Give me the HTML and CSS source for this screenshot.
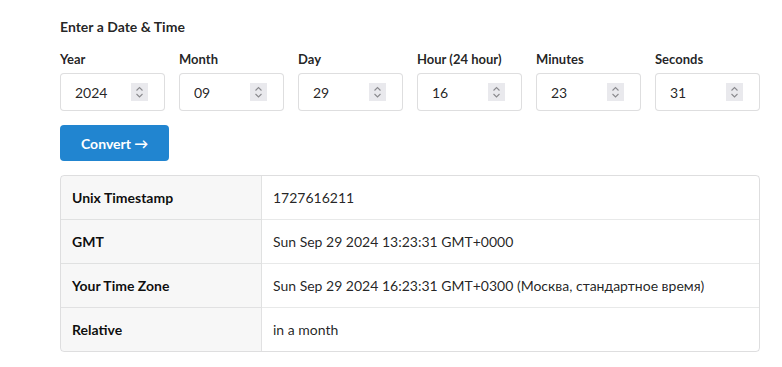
FILE: index.html
```html
<!DOCTYPE html>
<html>
<head>
<meta charset="utf-8">
<link rel="stylesheet" href="styles.css">
</head>
<body>
<div class="page">
  <h4 class="title">Enter a Date &amp; Time</h4>
  <div class="fields">
    <div class="field"><label>Year</label><div class="input"><input type="text" value="2024"><span class="spin"><svg width="17" height="18" viewBox="0 0 17 18"><path d="M5.5 7.5 L8.5 4.5 L11.5 7.5 M5.5 11 L8.5 14 L11.5 11" fill="none" stroke="#8a8a8e" stroke-width="1.1"/></svg></span></div></div>
    <div class="field"><label>Month</label><div class="input"><input type="text" value="09"><span class="spin"><svg width="17" height="18" viewBox="0 0 17 18"><path d="M5.5 7.5 L8.5 4.5 L11.5 7.5 M5.5 11 L8.5 14 L11.5 11" fill="none" stroke="#8a8a8e" stroke-width="1.1"/></svg></span></div></div>
    <div class="field"><label>Day</label><div class="input"><input type="text" value="29"><span class="spin"><svg width="17" height="18" viewBox="0 0 17 18"><path d="M5.5 7.5 L8.5 4.5 L11.5 7.5 M5.5 11 L8.5 14 L11.5 11" fill="none" stroke="#8a8a8e" stroke-width="1.1"/></svg></span></div></div>
    <div class="field"><label>Hour (24 hour)</label><div class="input"><input type="text" value="16"><span class="spin"><svg width="17" height="18" viewBox="0 0 17 18"><path d="M5.5 7.5 L8.5 4.5 L11.5 7.5 M5.5 11 L8.5 14 L11.5 11" fill="none" stroke="#8a8a8e" stroke-width="1.1"/></svg></span></div></div>
    <div class="field"><label>Minutes</label><div class="input"><input type="text" value="23"><span class="spin"><svg width="17" height="18" viewBox="0 0 17 18"><path d="M5.5 7.5 L8.5 4.5 L11.5 7.5 M5.5 11 L8.5 14 L11.5 11" fill="none" stroke="#8a8a8e" stroke-width="1.1"/></svg></span></div></div>
    <div class="field"><label>Seconds</label><div class="input"><input type="text" value="31"><span class="spin"><svg width="17" height="18" viewBox="0 0 17 18"><path d="M5.5 7.5 L8.5 4.5 L11.5 7.5 M5.5 11 L8.5 14 L11.5 11" fill="none" stroke="#8a8a8e" stroke-width="1.1"/></svg></span></div></div>
  </div>
  <div class="actions"><button class="btn">Convert →</button></div>
  <table class="result">
    <tr><td class="key">Unix Timestamp</td><td>1727616211</td></tr>
    <tr><td class="key">GMT</td><td>Sun Sep 29 2024 13:23:31 GMT+0000</td></tr>
    <tr><td class="key">Your Time Zone</td><td>Sun Sep 29 2024 16:23:31 GMT+0300 (Москва, стандартное время)</td></tr>
    <tr><td class="key">Relative</td><td>in a month</td></tr>
  </table>
</div>
</body>
</html>
```
FILE: styles.css
```css
html, body { margin: 0; padding: 0; background: #fff; }
body {
  font-family: Lato, "Noto Sans", sans-serif;
  font-size: 14px;
  color: rgba(0,0,0,0.87);
}
.page {
  width: 700px;
  padding: 18px 0 0 60px;
}
.title {
  margin: 0;
  font-size: 14px;
  font-weight: 700;
  line-height: 18px;
  color: rgba(0,0,0,0.87);
}
.fields {
  display: grid;
  grid-template-columns: repeat(6, minmax(0, 1fr));
  column-gap: 14px;
  margin-top: 15px;
}
.field { display: flex; flex-direction: column; min-width: 0; }
.field label {
  font-size: 13px;
  font-weight: 700;
  line-height: 16px;
  margin-bottom: 6px;
  color: rgba(0,0,0,0.87);
  white-space: nowrap;
}
.input {
  box-sizing: border-box;
  height: 38px;
  display: flex;
  align-items: center;
  padding: 0 16px 0 14px;
  border: 1px solid rgba(34,36,38,0.15);
  border-radius: 4px;
  background: #fff;
}
.input input {
  flex: 1;
  width: 0;
  min-width: 0;
  margin: 0;
  padding: 0;
  border: none;
  outline: none;
  background: transparent;
  font-family: inherit;
  font-size: 14px;
  color: rgba(0,0,0,0.87);
}
.spin {
  display: flex;
  width: 17px;
  height: 18px;
  background: #e9e9ed;
}
.actions { margin-top: 14px; }
.btn {
  height: 36px;
  padding: 0 21px;
  border: none;
  border-radius: 4px;
  background: #2185d0;
  color: #fff;
  font-family: inherit;
  font-size: 14px;
  font-weight: 700;
}
.result {
  margin-top: 14px;
  width: 700px;
  border-collapse: separate;
  border-spacing: 0;
  border: 1px solid rgba(34,36,38,0.15);
  border-radius: 4px;
}
.result td {
  height: 44px;
  padding: 0 11px;
  box-sizing: border-box;
  border-top: 1px solid rgba(34,36,38,0.1);
  font-size: 14px;
  color: rgba(0,0,0,0.87);
}
.result tr:first-child td { border-top: none; height: 43px; }
.result td.key {
  width: 201px;
  background: rgba(0,0,0,0.03);
  font-weight: 700;
  color: rgba(0,0,0,0.95);
  border-right: 1px solid rgba(34,36,38,0.1);
}
.result tr:first-child td.key { border-top-left-radius: 4px; }
.result tr:last-child td.key { border-bottom-left-radius: 4px; }
```
